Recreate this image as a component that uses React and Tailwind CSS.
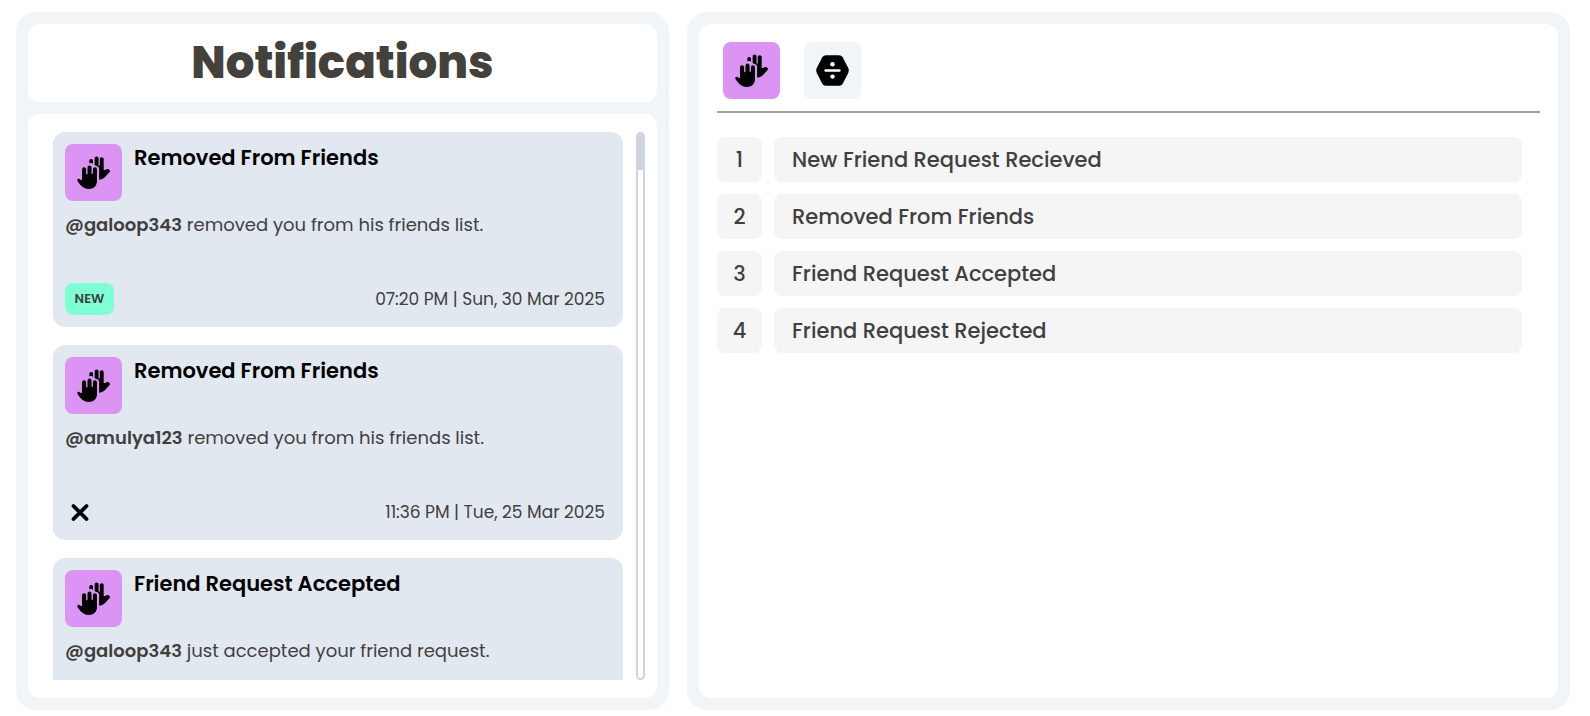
function HandsIcon({ className }) {
  return (
    <svg viewBox="0 0 34 34" className={className} aria-hidden="true" fill="currentColor">
      <path strokeWidth="4.200" stroke="currentColor" strokeLinecap="round" fill="none" d="M7.300 13.600V25M12.900 12V25M18.500 13.800V25" />
      <path d="M5.300 19v5.200c0 .7-.6.8-1.300.4C2.500 23.300.9 22.800.4 24.200c-.3.9.1 1.900.9 2.900C4.200 31 7.200 34 12.100 34c4.900 0 8.500-3 8.500-8.500V18z" />
      <path d="M12.700 4.900c0-1.100 1-1.800 1.900-1.800 1.100 0 1.900.8 1.900 1.800v3c-1.200-.7-2.500-.9-3.800-.1z" />
      <path d="M18.200 2.300c0-1.100.8-1.900 2-1.900s2 .8 2 1.900v7.500h1.300V3.300c0-1.100.8-1.900 2-1.900s2 .8 2 1.900v11.500l2.700-1c1.200-.5 2.500-.4 3.300.5.700.8.600 1.700-.1 2.500l-4.500 4.900c-1.600 1.700-3.300 2.500-5.300 2.700-.5 0-.8-.3-.8-.8V13.300c-.1-1.900-1.200-3-2.900-3.100-.7-.1-1.200-.4-1.700-.9z" />
    </svg>
  );
}

function DivideHexIcon({ className }) {
  return (
    <svg viewBox="0 0 34 34" className={className} aria-hidden="true">
      <path
        fill="currentColor"
        d="M10.500 1.200h13c1.700 0 3.100.8 4 2.200l5.600 10.800c.9 1.800.9 3.800 0 5.600l-5.600 10.800c-.9 1.400-2.300 2.200-4 2.200h-13c-1.700 0-3.100-.8-4-2.200L.9 19.800c-.9-1.800-.9-3.800 0-5.600L6.500 3.400c.9-1.400 2.300-2.200 4-2.200z"
      />
      <path stroke="#fff" strokeWidth="2.800" strokeLinecap="round" d="M10 17h14" />
      <circle cx="17" cy="10.500" r="2.300" fill="#fff" />
      <circle cx="17" cy="23.300" r="2.300" fill="#fff" />
    </svg>
  );
}

function CloseIcon({ className }) {
  return (
    <svg viewBox="0 0 18 18" className={className} aria-hidden="true">
      <path stroke="currentColor" strokeWidth="3.800" strokeLinecap="round" d="M2.500 3l13 13M15.500 3l-13 13" />
    </svg>
  );
}

const notifications = [
  { id: 1, title: "Removed From Friends", user: "@galoop343", text: "removed you from his friends list.", date: "07:20 PM | Sun, 30 Mar 2025", isNew: true },
  { id: 2, title: "Removed From Friends", user: "@amulya123", text: "removed you from his friends list.", date: "11:36 PM | Tue, 25 Mar 2025", isNew: false },
  { id: 3, title: "Friend Request Accepted", user: "@galoop343", text: "just accepted your friend request.", isNew: false },
];

const kinds = [
  "New Friend Request Recieved",
  "Removed From Friends",
  "Friend Request Accepted",
  "Friend Request Rejected",
];

function NotificationCard({ item }) {
  return (
    <li className="flex h-[195px] shrink-0 flex-col rounded-xl bg-[#e2e8ef] p-3">
      <div className="flex gap-3">
        <span className="flex size-[57px] shrink-0 items-center justify-center rounded-lg bg-[#dc94f4] text-black">
          <HandsIcon className="size-[33px]" />
        </span>
        <h2 className="text-[21px] leading-7 font-semibold text-black">{item.title}</h2>
      </div>
      <p className="mt-3 text-[18px] leading-6">
        <strong className="font-semibold">{item.user}</strong> {item.text}
      </p>
      <div className="mt-auto flex h-8 items-center justify-between pr-1.5">
        {item.isNew ? (
          <span className="flex h-8 w-[49px] items-center justify-center rounded-lg bg-[#7fffd4] text-[13px] font-semibold">NEW</span>
        ) : (
          <button type="button" aria-label="Dismiss" className="flex size-[30px] items-center justify-center text-black">
            <CloseIcon className="size-[18px]" />
          </button>
        )}
        {item.date && <time className="text-[17px] leading-6">{item.date}</time>}
      </div>
    </li>
  );
}

export default function App() {
  return (
    <main className="grid h-screen grid-cols-[minmax(0,653fr)_minmax(0,883fr)] gap-[18px] bg-white pt-3 pr-5 pb-1.5 pl-4 font-[Poppins,Inter,sans-serif] text-[#404040]">
      <section className="flex min-h-0 flex-col gap-3 rounded-[20px] bg-[#f1f5f8] p-3">
        <header className="flex h-[78px] shrink-0 items-center justify-center rounded-xl bg-white">
          <h1 className="text-[45px] leading-[68px] font-extrabold text-[#44403c]">Notifications</h1>
        </header>
        <div className="flex min-h-0 flex-1 gap-[13px] rounded-xl bg-white py-[18px] pr-3 pl-[25px]">
          <ul className="flex min-w-0 flex-1 flex-col gap-[18px] overflow-y-auto [scrollbar-width:none]">
            {notifications.map((n) => (
              <NotificationCard key={n.id} item={n} />
            ))}
          </ul>
          <div aria-hidden="true" className="w-[9px] overflow-hidden rounded-full border-2 border-[#d1d5db] bg-white">
            <div className="-mx-0.5 -mt-0.5 h-[38px] bg-[#cbd5e1]" />
          </div>
        </div>
      </section>

      <section className="flex min-h-0 flex-col rounded-[20px] bg-[#f1f5f8] p-3">
        <div className="flex-1 rounded-xl bg-white p-[18px]">
          <nav className="flex gap-6 border-b-2 border-[#a3a3a3] px-1.5 pb-3">
            <button type="button" aria-label="Friends" className="flex size-[57px] items-center justify-center rounded-lg bg-[#dc94f4] text-black">
              <HandsIcon className="size-[33px]" />
            </button>
            <button type="button" aria-label="Games" className="flex size-[57px] items-center justify-center rounded-lg bg-[#f1f5f8] text-black">
              <DivideHexIcon className="size-[33px]" />
            </button>
          </nav>
          <ol className="mt-6 flex flex-col gap-3 pr-[18px] text-[21px] leading-7 font-medium">
            {kinds.map((kind, i) => (
              <li key={kind} className="flex h-[45px] gap-3">
                <span className="flex w-[45px] items-center justify-center rounded-lg bg-[#f5f5f5]">{i + 1}</span>
                <span className="flex flex-1 items-center rounded-lg bg-[#f5f5f5] px-[18px]">{kind}</span>
              </li>
            ))}
          </ol>
        </div>
      </section>
    </main>
  );
}
